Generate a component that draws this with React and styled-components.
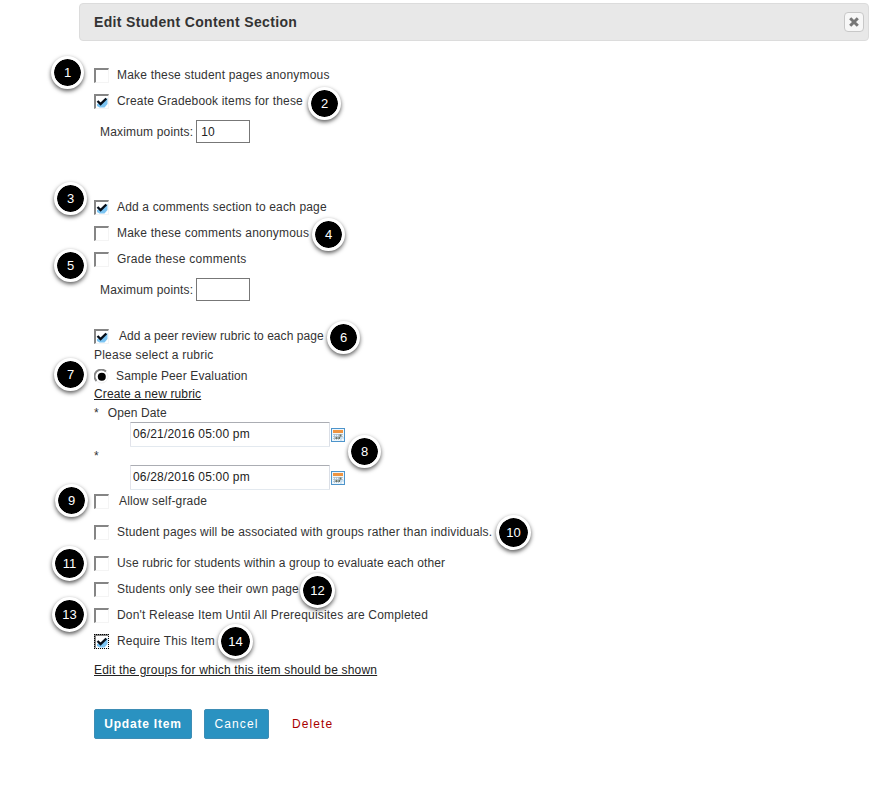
import React from "react";
import styled, { createGlobalStyle, css } from "styled-components";

const GlobalStyle = createGlobalStyle`
  * { box-sizing: border-box; }
  body {
    margin: 0;
    background: #fff;
    color: #333;
    font: 12px/16px "Liberation Sans", Arial, sans-serif;
  }
`;

const Page = styled.main`
  position: relative;
  width: 869px;
  height: 785px;
  padding-top: 3px;
  overflow: hidden;
`;

const TitleBar = styled.header`
  display: flex;
  align-items: center;
  justify-content: space-between;
  height: 38px;
  margin-left: 79px;
  padding: 0 4px 0 14px;
  background: #e8e8e8;
  border: 1px solid #dcdcdc;
  border-radius: 4px;
`;

const Title = styled.h1`
  margin: 0;
  font-size: 14px;
  letter-spacing: 0.34px;
  white-space: nowrap;
`;

const CloseButton = styled.button`
  display: flex;
  align-items: center;
  justify-content: center;
  width: 20px;
  height: 20px;
  padding: 0;
  background: #f7f7f7;
  border: 1px solid #c8c8c8;
  border-radius: 4px;
`;

const Form = styled.form`
  display: flex;
  flex-direction: column;
  padding: 21px 0 0 94px;
`;

const Row = styled.div`
  display: flex;
  align-items: center;
  height: ${(p) => p.$h || 26}px;
  margin-top: ${(p) => p.$gap || 0}px;
  padding-left: ${(p) => p.$indent || 0}px;
`;

const Text = styled.span`
  letter-spacing: ${(p) => p.$ls || 0.17}px;
  margin-left: ${(p) => p.$ml || 0}px;
  white-space: pre;
`;

const Link = styled.a`
  color: #222;
  letter-spacing: ${(p) => p.$ls}px;
  text-decoration: underline;
  text-underline-offset: 1px;
  white-space: nowrap;
`;

const Box = styled.span`
  display: block;
  flex: none;
  width: 15px;
  height: 15px;
  margin-top: 1px;
  background: #fff;
  border: solid;
  border-width: 2px 1px 1px 2px;
  border-color: #858585 #f4f4f4 #f4f4f4 #858585;
  ${(p) =>
    p.$focused &&
    css`
      outline: 1px dotted #000;
      outline-offset: -1px;
    `}
  svg { display: block; }
`;

const PointsInput = styled.input`
  width: 54px;
  height: 23px;
  margin: 0 0 1px 3px;
  padding: 1px 4px 0;
  border: 1px solid #777;
  color: #222;
  font: inherit;
  letter-spacing: 0.2px;
`;

const DateInput = styled.input`
  width: 200px;
  height: 25px;
  margin-right: 1px;
  padding: 0 2px 1px;
  border: 1px solid;
  border-color: #abadb3 #dbdfe6 #e3e9ef #e2e3ea;
  border-radius: 1px;
  color: #222;
  font: inherit;
  letter-spacing: 0.18px;
`;

const CalendarSvg = styled.svg`
  margin: 2px 0 0 0;
  flex: none;
`;

const RadioSvg = styled.svg`
  flex: none;
`;

const Button = styled.button`
  width: ${(p) => p.$w}px;
  height: 30px;
  margin-right: 12px;
  padding: 0;
  background: #2a92c1;
  border: 1px solid #3e8db5;
  border-radius: 2px;
  color: #fff;
  font: ${(p) => (p.$bold ? "bold" : "normal")} 12px "Liberation Sans", Arial, sans-serif;
  letter-spacing: ${(p) => (p.$bold ? 0.8 : 1.1)}px;
`;

const DeleteLink = styled.a`
  margin-left: 11px;
  color: #a80000;
  letter-spacing: 1.1px;
`;

const Badge = styled.span`
  position: absolute;
  left: ${(p) => p.$x - p.$size / 2}px;
  top: ${(p) => p.$y - p.$size / 2}px;
  display: flex;
  align-items: center;
  justify-content: center;
  width: ${(p) => p.$size}px;
  height: ${(p) => p.$size}px;
  background: #000;
  border: 3px solid #fff;
  background-clip: padding-box;
  border-radius: 50%;
  box-shadow: 0 2px 4px rgba(0, 0, 0, 0.65);
  color: #fff;
  font-size: 13px;
`;

const badges = [
  [67.5, 72.5], [324.5, 103.5], [70.5, 198.5], [328.5, 234.5], [70.5, 265.5],
  [343.5, 337.5], [70.5, 374.5], [364.5, 451.5], [71.5, 500.5], [513.5, 532.5],
  [69.5, 563.5], [317.5, 590.5], [69.5, 614.5], [235.5, 641.5],
];

function Check({ checked, focused }) {
  return (
    <Box $focused={focused}>
      {checked && (
        <svg width="12" height="12" viewBox="0 0 12 12">
          <path d="M1 8L4 7L11.5 2V8L8.5 11.5H3.5L1 10Z" fill="#7cc4f2" />
          <path d="M1.5 5L4.6 8L10.3 2.5" fill="none" stroke="#050d18" strokeWidth="2.4" />
        </svg>
      )}
    </Box>
  );
}

function CheckRow({ children, ls, ml = 8, gap, h, checked, focused }) {
  return (
    <Row as="label" $gap={gap} $h={h}>
      <Check checked={checked} focused={focused} />
      <Text $ls={ls} $ml={ml}>{children}</Text>
    </Row>
  );
}

function Calendar() {
  return (
    <CalendarSvg width="15" height="15" viewBox="0 0 15 15">
      <rect x="0.5" y="0.5" width="13" height="13" fill="#eef6fb" stroke="#4d94cb" />
      <path d="M2 2H12V5H2Z" fill="#ee9440" />
      <path d="M2 6.5H12M2 8.5H12M2 10.5H9M3.5 6V12M5.5 6V12M7.5 6V12M9.5 6V10" stroke="#a9bcca" strokeWidth="0.8" />
      <path d="M8.5 6.5H10.5V8.5H8.5ZM4.5 9H6.5V11H4.5ZM7.5 9H9V11H7.5Z" fill="#6c7363" />
      <path d="M10 13V10H13" fill="#fff" stroke="#8fbfe2" strokeWidth="0.7" />
    </CalendarSvg>
  );
}

export default function App() {
  return (
    <>
      <GlobalStyle />
      <Page>
        <TitleBar>
          <Title>Edit Student Content Section</Title>
          <CloseButton type="button" aria-label="Close">
            <svg width="10" height="10" viewBox="0 0 10 10">
              <path d="M1.2 1.2L8.8 8.8M8.8 1.2L1.2 8.8" stroke="#777" strokeWidth="3" />
            </svg>
          </CloseButton>
        </TitleBar>
        <Form>
          <CheckRow ls={0.19}>Make these student pages anonymous</CheckRow>
          <CheckRow ls={0.16} checked>Create Gradebook items for these</CheckRow>
          <Row $gap={5} $indent={6}>
            <Text $ls={0.17}>Maximum points:</Text>
            <PointsInput defaultValue="10" />
          </Row>
          <CheckRow gap={49} ls={0.16} checked>Add a comments section to each page</CheckRow>
          <CheckRow ls={0.21}>Make these comments anonymous</CheckRow>
          <CheckRow ls={0.24}>Grade these comments</CheckRow>
          <Row $gap={5} $indent={6}>
            <Text $ls={0.17}>Maximum points:</Text>
            <PointsInput defaultValue="" />
          </Row>
          <CheckRow gap={22} h={22} ml={10} ls={0.05} checked>Add a peer review rubric to each page</CheckRow>
          <Row $h={16}><Text $ls={0.22}>Please select a rubric</Text></Row>
          <Row as="label" $gap={3} $h={20}>
            <RadioSvg width="15" height="15" viewBox="0 0 15 15">
              <circle cx="7.5" cy="7.5" r="6.5" fill="#fff" stroke="#f0f0f0" />
              <path d="M2.5 12A6.5 6.5 0 0 1 12 2.5" fill="none" stroke="#858585" strokeWidth="1.8" />
              <circle cx="7.8" cy="7.8" r="4" fill="#000" />
            </RadioSvg>
            <Text $ml={7} $ls={0.13}>Sample Peer Evaluation</Text>
          </Row>
          <Row $h={16}><Link $ls={0.13}>Create a new rubric</Link></Row>
          <Row $h={18} $gap={2}>
            <Text>*</Text>
            <Text $ml={9} $ls={0.1}>Open Date</Text>
          </Row>
          <Row $h={25} $indent={36}>
            <DateInput defaultValue="06/21/2016 05:00 pm" />
            <Calendar />
          </Row>
          <Row $h={18}><Text>*</Text></Row>
          <Row $h={25} $indent={36}>
            <DateInput defaultValue="06/28/2016 05:00 pm" />
            <Calendar />
          </Row>
          <CheckRow gap={1} h={20} ml={10} ls={0.17}>Allow self-grade</CheckRow>
          <CheckRow gap={8} ls={0.17}>Student pages will be associated with groups rather than individuals.</CheckRow>
          <CheckRow gap={5} ls={0.12}>Use rubric for students within a group to evaluate each other</CheckRow>
          <CheckRow ls={0.14}>Students only see their own page</CheckRow>
          <CheckRow ls={0.19}>Don't Release Item Until All Prerequisites are Completed</CheckRow>
          <CheckRow ls={0.2} checked focused>Require This Item</CheckRow>
          <Row $h={18} $gap={7}>
            <Link $ls={0.19}>Edit the groups for which this item should be shown</Link>
          </Row>
          <Row $h={30} $gap={30}>
            <Button type="button" $w={98} $bold>Update Item</Button>
            <Button type="button" $w={65}>Cancel</Button>
            <DeleteLink>Delete</DeleteLink>
          </Row>
        </Form>
        {badges.map(([x, y], i) => (
          <Badge key={i} $x={x} $y={y} $size={i < 9 ? 33 : 35}>{i + 1}</Badge>
        ))}
      </Page>
    </>
  );
}
